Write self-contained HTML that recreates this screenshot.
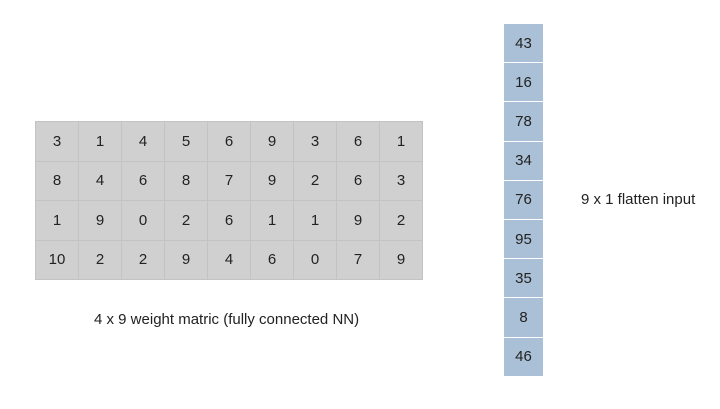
<!DOCTYPE html><html><head><style>
body{margin:0;width:720px;height:409px;background:#fff;position:relative;font-family:"Liberation Sans",sans-serif;overflow:hidden}
table{position:absolute;border-collapse:collapse}
#m{left:35px;top:121px;background:#d0d0d0}
#m td{width:42px;height:38.5px;border:1px solid #c3c3c3;text-align:center;font-size:15px;color:#222;padding:0}
#v{left:504px;top:24px}
#v td{width:39px;height:38.2px;background:#aac0d6;border-bottom:1px solid #fff;text-align:center;font-size:15px;color:#222;padding:0}
.l{position:absolute;font-size:15px;color:#222}
</style></head><body>
<table id="m">
<tr><td>3</td><td>1</td><td>4</td><td>5</td><td>6</td><td>9</td><td>3</td><td>6</td><td>1</td></tr>
<tr><td>8</td><td>4</td><td>6</td><td>8</td><td>7</td><td>9</td><td>2</td><td>6</td><td>3</td></tr>
<tr><td>1</td><td>9</td><td>0</td><td>2</td><td>6</td><td>1</td><td>1</td><td>9</td><td>2</td></tr>
<tr><td>10</td><td>2</td><td>2</td><td>9</td><td>4</td><td>6</td><td>0</td><td>7</td><td>9</td></tr>
</table>
<table id="v">
<tr><td>43</td></tr><tr><td>16</td></tr><tr><td>78</td></tr><tr><td>34</td></tr><tr><td>76</td></tr><tr><td>95</td></tr><tr><td>35</td></tr><tr><td>8</td></tr><tr><td>46</td></tr>
</table>
<div class="l" style="left:94px;top:311px">4 x 9 weight matric (fully connected NN)</div>
<div class="l" style="left:581px;top:191px">9 x 1 flatten input</div>
</body></html>
